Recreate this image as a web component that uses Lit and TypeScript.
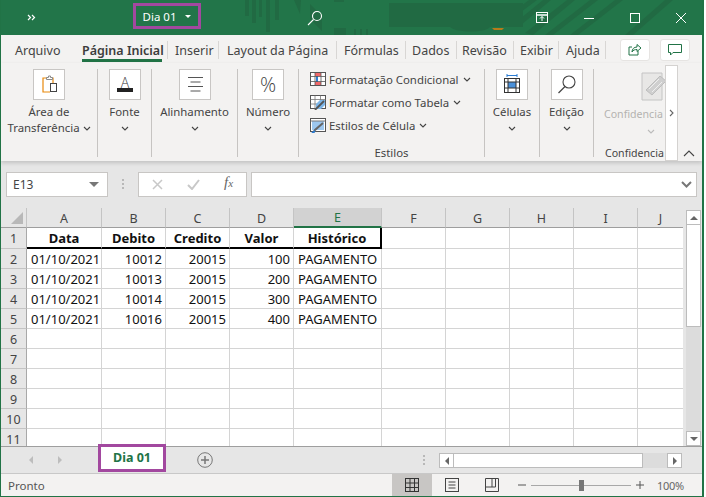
import { LitElement, html, css, svg } from "lit";
import { customElement } from "lit/decorators.js";

const chev = (color = "#444") => html`<svg class="chev" width="8" height="5" viewBox="0 0 8 5"><path d="M1 1l3 3 3-3" fill="none" stroke=${color} stroke-width="1.1"/></svg>`;

const colsTop = ["A", "B", "C", "D", "E", "F", "G", "H", "I", "J"];
const linhas = [
  ["01/10/2021", "10012", "20015", "100", "PAGAMENTO"],
  ["01/10/2021", "10013", "20015", "200", "PAGAMENTO"],
  ["01/10/2021", "10014", "20015", "300", "PAGAMENTO"],
  ["01/10/2021", "10016", "20015", "400", "PAGAMENTO"],
];
const titulos = ["Data", "Debito", "Credito", "Valor", "Histórico"];

// w = largura da aba, p = recuo do texto
const abas = [
  { t: "Arquivo", w: 81, p: 14 },
  { t: "Página Inicial", w: 86, p: 0, on: true, sep: true },
  { t: "Inserir", w: 51, p: 7, sep: true },
  { t: "Layout da Página", w: 118, p: 8, sep: true },
  { t: "Fórmulas", w: 69, p: 7, sep: true },
  { t: "Dados", w: 51, p: 6, sep: true },
  { t: "Revisão", w: 57, p: 5, sep: true },
  { t: "Exibir", w: 45, p: 6, sep: true },
  { t: "Ajuda", w: 47, p: 7, sep: true },
];

const icClip = svg`<path d="M15 9h-5v14h7" fill="none" stroke="#e8890c" stroke-width="1.2"/><path d="M20 14v-5h-1" fill="none" stroke="#e8890c" stroke-width="1.2"/><path d="M13.5 10.5v-2h2v-1.5h2v1.5h2v2z" fill="#fff" stroke="#8a8a8a"/><rect x="17.5" y="14.5" width="6" height="8" fill="#fff" stroke="#444"/>`;
const icFont = svg`<text x="16" y="18.5" text-anchor="middle" font-size="14" font-weight="300" font-family="Open Sans" fill="#333">A</text><rect x="8" y="19" width="16" height="4" fill="#222"/>`;
const icAlign = svg`<path d="M9 8.5h15M11.500 13h10M9 17.500h15M11.500 22h10" stroke="#555" stroke-width="1"/>`;
const icPct = svg`<text x="16" y="23" text-anchor="middle" font-size="20" font-weight="300" font-family="Open Sans" fill="#444">%</text>`;
const icCells = svg`<path d="M11 6.500h10M11 5v3M21 5v3" stroke="#2b7cd3" stroke-width="1"/><rect x="8.500" y="9.500" width="15" height="14" fill="#fff" stroke="#333"/><rect x="12" y="13" width="8" height="6" fill="#4a90d9"/><path d="M8.500 13h15M8.500 19h15M12 9.500v14M20 9.500v14" stroke="#333" stroke-width="1"/>`;
const icFind = svg`<circle cx="18" cy="13" r="6" fill="none" stroke="#444" stroke-width="1.1"/><path d="M14 17.500l-6.500 6.500" stroke="#444" stroke-width="1.3"/>`;
const icCond = svg`<rect x=".5" y=".5" width="15" height="13" fill="#fff" stroke="#555"/><rect x="5" y="1" width="6" height="3" fill="#f0686a"/><rect x="5" y="10" width="6" height="3" fill="#f0686a"/><rect x="11" y="4" width="4" height="6" fill="#fff"/><rect x="6" y="4" width="2" height="6" fill="#2b7cd3"/><path d="M.5 4.500h15M.5 9.500h15M5 .5v13M11 .5v13" stroke="#555" stroke-width=".8" fill="none"/>`;
const icTabela = svg`<rect x=".5" y=".5" width="15" height="13" fill="#fff" stroke="#555"/><path d="M.5 4.500h15M.5 9h15M5 .5v13M10.500 .5v13" stroke="#777" stroke-width=".8"/><path d="M6 9l4-4h5v5l-4 4H6z" fill="#7db6e8"/><path d="M5 15L14 6" stroke="#555" stroke-width="1.800"/>`;
const icEstilo = svg`<rect x=".5" y=".5" width="15" height="13" fill="#fff" stroke="#555"/><rect x="2" y="3" width="12" height="9" fill="#9cc7ef"/><path d="M.5 3h15" stroke="#777"/><path d="M3 15l2-3 8-7" stroke="#666" stroke-width="2" fill="none"/><path d="M2 15l3-2" stroke="#2b7cd3" stroke-width="2"/>`;

@customElement("app-root")
export class AppRoot extends LitElement {
  static styles = css`
    :host {
      display: block;
      width: 704px;
      height: 497px;
      font-family: "Noto Sans", "Open Sans", sans-serif;
      color: #444;
      background: #fff;
    }
    .janela {
      height: 496px;
      display: flex;
      flex-direction: column;
      border: solid #217346;
      border-width: 0 2px 1px 1px;
      background: #e6e6e6;
      overflow: hidden;
      box-sizing: content-box;
      width: 701px;
    }
    svg { display: block; }

    /* barra de titulo */
    .titulo {
      position: relative;
      height: 35px;
      flex: none;
      margin: 0 -2px 0 -1px;
      background: #227549;
      display: flex;
      align-items: center;
      color: #fff;
    }
    .padrao { position: absolute; left: 0; top: 0; }
    .titulo > :not(.padrao) { position: relative; }
    .mais { margin-left: 27px; width: 9px; }
    .nome {
      margin-left: 97px;
      width: 68px;
      height: 26px;
      margin-top: -3px;
      box-sizing: border-box;
      border: 3px solid #a2489f;
      display: flex;
      align-items: center;
      justify-content: center;
      gap: 9px;
      font-size: 11.5px;
    }
    .tri { width: 0; height: 0; border: 3px solid transparent; border-top: 3px solid #fff; border-bottom: 0; }
    .busca { margin-left: 106px; }
    .ctl { margin-left: auto; display: flex; align-items: center; }
    .ctl svg { margin-right: 36px; }
    .ctl svg:last-child { margin-right: 18px; }

    /* abas */
    .abas {
      height: 28px;
      flex: none;
      background: #f3f2f1;
      display: flex;
      align-items: stretch;
      font-size: 12.5px;
      color: #444;
    }
    .aba {
      box-sizing: border-box;
      position: relative;
      padding-top: 7px;
      white-space: nowrap;
    }
    .aba.sep::after {
      content: "";
      position: absolute;
      right: 0;
      top: 6px;
      height: 18px;
      width: 1px;
      background: #d8d6d4;
    }
    .aba.on { font-weight: 600; color: #3c3c3c; }
    .aba.on::before {
      content: "";
      position: absolute;
      left: 0;
      right: 6px;
      bottom: 1px;
      height: 3px;
      background: #217346;
    }
    .btns { margin-left: auto; display: flex; gap: 10px; padding: 4px 12px 0 0; }
    .btn {
      width: 30px;
      height: 22px;
      box-sizing: border-box;
      background: #fff;
      border: 1px solid #e6e4e2;
      border-radius: 3px;
      display: flex;
      align-items: center;
      justify-content: center;
    }

    /* faixa de opcoes */
    .faixa {
      position: relative;
      z-index: 1;
      height: 98px;
      flex: none;
      box-sizing: border-box;
      background: #f3f2f1;
      display: flex;
      padding: 6px 0 4px;
      box-shadow: 0 2px 4px rgba(0, 0, 0, 0.16);
      font-size: 11.4px;
      color: #444;
    }
    .grupo {
      box-sizing: border-box;
      border-right: 1px solid #c6c4c2;
      display: flex;
      flex-direction: column;
      align-items: center;
      line-height: 16px;
      white-space: nowrap;
    }
    .caixa {
      width: 32px;
      height: 31px;
      flex: none;
      box-sizing: border-box;
      background: #fff;
      border: 1px solid #c8c6c4;
      margin-bottom: 4px;
    }
    .caixa svg { margin: -1px; }
    .chev { display: inline-block; vertical-align: middle; }
    .estilos { align-items: flex-start; padding: 0 0 0 11px; position: relative; }
    .est { display: flex; align-items: center; height: 23px; gap: 3px; margin-top: -1px; margin-bottom: 1px; }
    .est .chev { margin-left: 1px; }
    .rot { position: absolute; left: 0; right: 0; bottom: -4px; text-align: center; }
    .conf { border: 0; position: relative; overflow: hidden; width: 71px; flex: none; align-items: flex-start; font-size: 10.6px; }
    .conf .icone { margin: 3px 0 0 47px; flex: none; }
    .conf .apagado { color: #b4b2b0; margin: 4px 0 0 10px; }
    .conf .abre { margin-left: 53px; }
    .conf .rot { left: 11px; text-align: left; }
    .seta {
      position: absolute;
      left: 664px;
      top: 2px;
      width: 13px;
      height: 96px;
      box-sizing: border-box;
      background: #fff;
      border: 1px solid #d4d2d0;
      display: flex;
      align-items: center;
      justify-content: center;
    }
    .recolhe { position: absolute; left: 682px; top: 87px; }

    /* barra de formula */
    .formula {
      height: 47px;
      flex: none;
      box-sizing: border-box;
      padding: 11px 5px;
      display: flex;
      font-size: 12px;
      color: #444;
    }
    .campo {
      height: 25px;
      box-sizing: border-box;
      background: #fff;
      border: 1px solid #c8c6c4;
      display: flex;
      align-items: center;
    }
    .nomecel { width: 102px; padding: 0 6px; justify-content: space-between; }
    .caret { width: 0; height: 0; border: 5px solid transparent; border-top: 5px solid #777; border-bottom: 0; margin-right: 2px; }
    .pontos { width: 30px; display: flex; align-items: center; justify-content: center; }
    .acoes { width: 109px; position: relative; }
    .acoes svg { position: absolute; top: 6px; }
    .fx { position: absolute; left: 85px; top: 1px; font-family: "Liberation Serif", serif; font-style: italic; font-size: 15px; color: #666; }
    .fx i { font-size: 11px; }
    .entrada { flex: 1; margin-left: 4px; justify-content: flex-end; padding-right: 4px; }

    /* planilha */
    .planilha { height: 238px; flex: none; display: flex; }
    .grade {
      width: 682px;
      height: 238px;
      overflow: hidden;
      display: grid;
      grid-template-columns: 26px 75px 64px 64px 64px 88px 64px 64px 64px 64px 45px;
      grid-template-rows: 20px 21px repeat(11, 20px);
      background: #fff;
      font-size: 13px;
      color: #111;
    }
    .h {
      background: #e6e6e6;
      color: #444;
      display: flex;
      align-items: center;
      justify-content: center;
      box-sizing: border-box;
      font-size: 12.5px;
      padding-top: 1px;
    }
    .topo { border-right: 1px solid #c4c4c4; border-bottom: 1px solid #9e9e9e; }
    .topo.ult { border-right: 0; }
    .topo.sel { background: #d2d2d2; color: #217346; border-bottom: 2px solid #217346; }
    .lat { border-right: 1px solid #a8a8a8; border-bottom: 1px solid #c4c4c4; }
    .canto { border-right: 1px solid #c4c4c4; border-bottom: 1px solid #9e9e9e; position: relative; }
    .canto::after {
      content: "";
      position: absolute;
      right: 3px;
      bottom: 3px;
      border: solid transparent;
      border-width: 0 0 12px 12px;
      border-bottom-color: #b8b8b8;
    }
    .c {
      box-sizing: border-box;
      border-right: 1px solid #d4d4d4;
      border-bottom: 1px solid #d4d4d4;
      padding: 1px 4px 0;
      display: flex;
      align-items: center;
      white-space: nowrap;
      overflow: hidden;
    }
    .c.ult { border-right: 0; }
    .dir { justify-content: flex-end; padding-right: 3px; }
    .tit { font-weight: 700; justify-content: center; border-right-color: #d4d4d4; border-bottom: 2px solid #000; }
    .tit.fim { border-right: 2px solid #000; }

    .rolagem {
      width: 15px;
      margin: 2px 0 0 3px;
      height: 236px;
      display: flex;
      flex-direction: column;
      background: #dcdcdc;
    }
    .rb {
      height: 15px;
      flex: none;
      box-sizing: border-box;
      background: #fff;
      border: 1px solid #bcbcbc;
      display: flex;
      align-items: center;
      justify-content: center;
    }
    .polegar { height: 102px; flex: none; box-sizing: border-box; background: #fff; border: 1px solid #bcbcbc; border-top: 0; }
    .vazio { flex: 1; }
    .up { width: 0; height: 0; border: 4px solid transparent; border-bottom: 4px solid #666; border-top: 0; }
    .down { width: 0; height: 0; border: 4px solid transparent; border-top: 4px solid #666; border-bottom: 0; }
    .left { width: 0; height: 0; border: 4px solid transparent; border-right: 4px solid #666; border-left: 0; }
    .right { width: 0; height: 0; border: 4px solid transparent; border-left: 4px solid #666; border-right: 0; }

    /* abas de planilha */
    .folhas {
      height: 28px;
      flex: none;
      box-sizing: border-box;
      border-top: 1px solid #9e9e9e;
      border-bottom: 1px solid #c8c8c8;
      display: flex;
      align-items: center;
      position: relative;
      z-index: 2;
    }
    .nav { display: flex; gap: 25px; margin-left: 28px; width: 69px; }
    .nav .left { border-right-color: #bdbdbd; }
    .nav .right { border-left-color: #bdbdbd; }
    .folha {
      width: 68px;
      height: 28px;
      margin-top: -5px;
      box-sizing: border-box;
      border: 3px solid #a2489f;
      background: #fff;
      color: #217346;
      font-weight: 700;
      font-size: 12.5px;
      display: flex;
      align-items: center;
      justify-content: center;
    }
    .novo { margin-left: 31px; }
    .grip { margin-left: 210px; margin-right: 13px; }
    .hscroll { display: flex; width: 243px; height: 15px; background: #dcdcdc; margin-top: 1px; }
    .hscroll .rb { width: 15px; }
    .hpol { width: 189px; box-sizing: border-box; background: #fff; border: 1px solid #bcbcbc; border-left: 0; }
    .hscroll .rb:last-child { margin-left: auto; }

    /* status */
    .status {
      flex: 1;
      background: #f3f2f1;
      display: flex;
      align-items: center;
      font-size: 11.5px;
      color: #555;
      padding-left: 7px;
    }
    .pronto { width: 384px; }
    .vista { height: 100%; width: 40px; display: flex; align-items: center; justify-content: center; }
    .vista.on { background: #c8c6c4; }
    .zoom { display: flex; align-items: center; margin-left: 6px; }
    .trilha { width: 100px; height: 1px; background: #a8a8a8; margin: 0 5px; position: relative; }
    .trilha::after { content: ""; position: absolute; left: 48px; top: -5px; width: 5px; height: 11px; background: #777; }
    .pct { margin-left: 13px; color: #666; font-size: 11px; letter-spacing: -0.3px; }
  `;

  renderGrupo(w: number, ic: unknown, linha1: string, linha2?: string) {
    return html`<div class="grupo" style="width:${w}px">
      <div class="caixa"><svg width="32" height="31" viewBox="0 0 32 31">${ic}</svg></div>
      ${linha2
        ? html`<div>${linha1}</div><div>${linha2} ${chev()}</div>`
        : html`<div>${linha1}</div><div>${chev()}</div>`}
    </div>`;
  }

  renderGrade() {
    const celulas = [];
    celulas.push(html`<div class="h canto"></div>`);
    colsTop.forEach((c, i) => {
      celulas.push(html`<div class="h topo ${c === "E" ? "sel" : ""} ${i === 9 ? "ult" : ""}">${c}</div>`);
    });
    celulas.push(html`<div class="h lat">1</div>`);
    titulos.forEach((t, i) => {
      celulas.push(html`<div class="c tit ${i === 4 ? "fim" : ""}">${t}</div>`);
    });
    for (let i = 0; i < 5; i++) celulas.push(html`<div class="c ${i === 4 ? "ult" : ""}"></div>`);
    for (let r = 2; r <= 11; r++) {
      celulas.push(html`<div class="h lat">${r}</div>`);
      const l = linhas[r - 2];
      for (let i = 0; i < 10; i++) {
        const v = l && i < 5 ? l[i] : "";
        const dir = i >= 1 && i <= 3;
        celulas.push(html`<div class="c ${dir ? "dir" : ""} ${i === 9 ? "ult" : ""}">${v}</div>`);
      }
    }
    return celulas;
  }

  render() {
    return html`
      <div class="janela">
        <div class="titulo">
          <svg class="padrao" width="704" height="35" viewBox="0 0 704 35" fill="#216a43">
            <path d="M245 0h4v16h-4zM252 0h4v23h-4zM259 0h3v17h-3zM266 0h4v32h-4zM275 0h4v20h-4zM294 0h7l-1 14zM310 4l12 12v15l-12-12z"/>
            <path d="M334 0h10v2h-10zM334 28h12v7h-12zM354 29h2v6h-2zM360 29h2v6h-2zM366 29h2v6h-2z"/>
            <path d="M389 3h134v24h-134z"/>
            <path d="M450 27h40c-4 6-34 6-40 0z" fill="#216a43"/>
            <path d="M492 28h12l-2 2h-8z" fill="#b87a1a"/>
            <path d="M521 6l8-6h8l-16 12zM521 18l22-18h8L521 25zM525 33l42-33h8L533 35zM545 35l45-35h8L553 35zM570 35l45-35h8L578 35zM625 35l40-35h8L633 35z"/>
          </svg>
          <svg class="mais" width="9" height="7" viewBox="0 0 9 7" fill="none" stroke="#fff" stroke-width="1.200"><path d="M1 1l2.500 2.500L1 6M5 1l2.500 2.500L5 6"/></svg>
          <div class="nome">Dia 01 <span class="tri"></span></div>
          <svg class="busca" width="16" height="16" viewBox="0 0 16 16" fill="none" stroke="#fff" stroke-width="1.1"><circle cx="10" cy="6" r="4.500"/><path d="M6.500 9.500L1 15"/></svg>
          <div class="ctl">
            <svg width="12" height="11" viewBox="0 0 12 11" fill="none" stroke="#fff"><rect x=".5" y=".5" width="11" height="10"/><path d="M.5 3h11" stroke-width="1.500"/><path d="M6 9V4.500M4 6.500l2-2 2 2"/></svg>
            <svg width="10" height="10" viewBox="0 0 10 10"><path d="M0 5.500h10" stroke="#fff"/></svg>
            <svg width="10" height="10" viewBox="0 0 10 10" fill="none" stroke="#fff"><rect x=".5" y=".5" width="9" height="9"/></svg>
            <svg width="10" height="10" viewBox="0 0 10 10" fill="none" stroke="#fff"><path d="M0 0l10 10M10 0L0 10"/></svg>
          </div>
        </div>

        <div class="abas">
          ${abas.map((a) => html`<div class="aba ${a.on ? "on" : ""} ${a.sep ? "sep" : ""}" style="width:${a.w}px;padding-left:${a.p}px">${a.t}</div>`)}
          <div class="btns">
            <div class="btn"><svg width="14" height="14" viewBox="0 0 14 14" fill="none" stroke="#217346"><path d="M10 8v4H1V4h3"/><path d="M4 9c0-3 2-5 5-5V1.500L13 5 9 8.500V6.500C7 6.500 5 7 4 9z"/></svg></div>
            <div class="btn"><svg width="14" height="12" viewBox="0 0 14 12" fill="none" stroke="#217346"><path d="M.5.5h13v8H5L2.500 11V8.500h-2z"/></svg></div>
          </div>
        </div>

        <div class="faixa">
          ${this.renderGrupo(97, icClip, "Área de", "Transferência")}
          ${this.renderGrupo(54, icFont, "Fonte")}
          ${this.renderGrupo(86, icAlign, "Alinhamento")}
          ${this.renderGrupo(61, icPct, "Número")}
          <div class="grupo estilos" style="width:186px">
            <div class="est"><svg width="16" height="15" viewBox="0 0 16 15">${icCond}</svg>Formatação Condicional ${chev()}</div>
            <div class="est"><svg width="16" height="15" viewBox="0 0 16 15">${icTabela}</svg>Formatar como Tabela ${chev()}</div>
            <div class="est"><svg width="16" height="15" viewBox="0 0 16 15">${icEstilo}</svg>Estilos de Célula ${chev()}</div>
            <div class="rot">Estilos</div>
          </div>
          ${this.renderGrupo(55, icCells, "Células")}
          ${this.renderGrupo(54, icFind, "Edição")}
          <div class="grupo conf">
            <svg class="icone" width="24" height="30" viewBox="0 0 24 30"><path d="M1 1h20v27H1z" fill="#e8e7e6" stroke="#c4c4c4"/><path d="M5 18L19 4l6 5-14 14z" fill="#cfcfcf" stroke="#bdbdbd"/><path d="M8 17l10-10M11 20l10-10" stroke="#eee"/></svg>
            <div class="apagado">Confidencia</div>
            <div class="abre">${chev("#bbb")}</div>
            <div class="rot">Confidencia</div>
          </div>
          <div class="seta"><svg width="5" height="8" viewBox="0 0 5 8"><path d="M1 1l3 3-3 3" fill="none" stroke="#666" stroke-width="1.100"/></svg></div>
          <svg class="recolhe" width="12" height="7" viewBox="0 0 12 7"><path d="M1 6l5-5 5 5" fill="none" stroke="#444" stroke-width="1.100"/></svg>
        </div>

        <div class="formula">
          <div class="campo nomecel">E13<span class="caret"></span></div>
          <div class="pontos"><svg width="3" height="11" viewBox="0 0 3 11" fill="#b8b8b8"><rect width="2" height="2" y="0"/><rect width="2" height="2" y="4"/><rect width="2" height="2" y="8"/></svg></div>
          <div class="campo acoes">
            <svg style="left:13px" width="11" height="11" viewBox="0 0 11 11"><path d="M1 1l9 9M10 1l-9 9" stroke="#c8c8c8" stroke-width="1.500"/></svg>
            <svg style="left:48px" width="13" height="11" viewBox="0 0 13 11"><path d="M1 6l4 4 7-9" fill="none" stroke="#c8c8c8" stroke-width="2"/></svg>
            <span class="fx">f<i>x</i></span>
          </div>
          <div class="campo entrada"><svg width="11" height="7" viewBox="0 0 11 7"><path d="M1 1l4.500 4.500L10 1" fill="none" stroke="#777" stroke-width="2"/></svg></div>
        </div>

        <div class="planilha">
          <div class="grade">${this.renderGrade()}</div>
          <div class="rolagem">
            <div class="rb"><span class="up"></span></div>
            <div class="polegar"></div>
            <div class="vazio"></div>
            <div class="rb"><span class="down"></span></div>
          </div>
        </div>

        <div class="folhas">
          <div class="nav"><div class="left"></div><div class="right"></div></div>
          <div class="folha">Dia 01</div>
          <svg class="novo" width="16" height="16" viewBox="0 0 16 16" fill="none" stroke="#777"><circle cx="8" cy="8" r="7.300"/><path d="M4 8h8M8 4v8" stroke-width="1.500"/></svg>
          <svg class="grip" width="3" height="11" viewBox="0 0 3 11" fill="#b8b8b8"><rect width="2" height="2" y="0"/><rect width="2" height="2" y="4"/><rect width="2" height="2" y="8"/></svg>
          <div class="hscroll">
            <div class="rb"><span class="left"></span></div>
            <div class="hpol"></div>
            <div class="rb"><span class="right"></span></div>
          </div>
        </div>

        <div class="status">
          <div class="pronto">Pronto</div>
          <div class="vista on"><svg width="14" height="14" viewBox="0 0 14 14" fill="none" stroke="#333"><rect x=".5" y=".5" width="13" height="13"/><path d="M.5 5h13M.5 9.500h13M5 .5v13M9.500 .5v13"/></svg></div>
          <div class="vista"><svg width="14" height="14" viewBox="0 0 14 14" fill="none" stroke="#444"><rect x=".5" y=".5" width="13" height="13"/><path d="M3.500 4h7M3.500 7h7M3.500 10h7"/></svg></div>
          <div class="vista"><svg width="14" height="14" viewBox="0 0 14 14" fill="none" stroke="#444"><path d="M.5 .5h13v13H.5zM.5 9h6.500V.5M7 9h3.500V.5"/></svg></div>
          <div class="zoom">
            <svg width="8" height="8" viewBox="0 0 8 8"><path d="M0 4h8" stroke="#555"/></svg>
            <div class="trilha"></div>
            <svg width="8" height="8" viewBox="0 0 8 8"><path d="M0 4h8M4 0v8" stroke="#555"/></svg>
            <div class="pct">100%</div>
          </div>
        </div>
      </div>
    `;
  }
}
